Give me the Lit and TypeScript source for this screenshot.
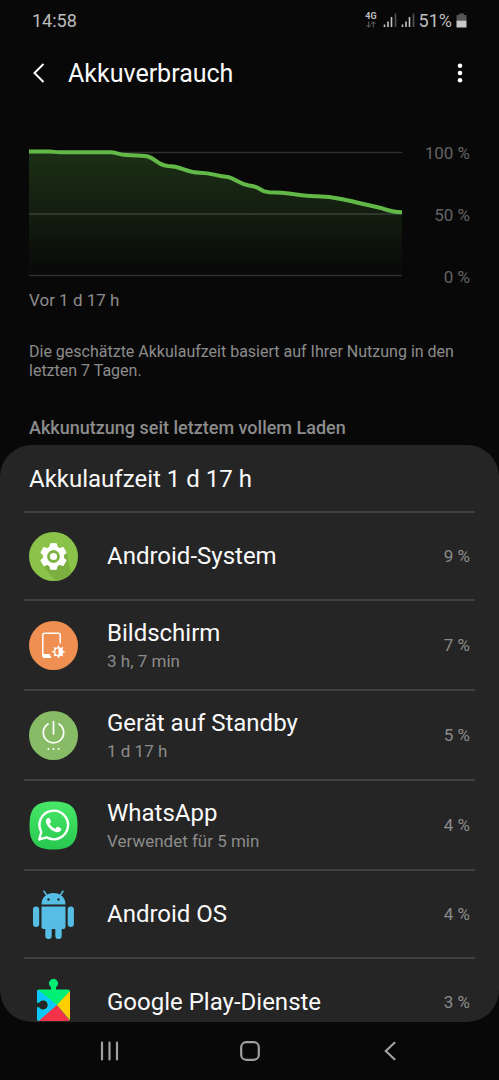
import { LitElement, html, svg, css } from "lit";
import { customElement } from "lit/decorators.js";

type Usage = { name: string; detail?: string; percent: number; icon: unknown };

const gearTeeth = [0, 60, 120, 180, 240, 300];

const systemIcon = svg`
  <circle cx="24.5" cy="24.5" r="24.5" fill="#8bc34a" />
  <path d="M15 36 L37 18 L42 42 A24.5 24.5 0 0 1 27 48.9 Z" fill="#7cae42" />
  <circle cx="24.5" cy="24.5" r="7.8" fill="none" stroke="#fff" stroke-width="5.4" />
  ${gearTeeth.map(
    (a) => svg`<path d="M20.5 16.5 L21.6 11.7 H27.4 L28.5 16.5 Z" fill="#fff" stroke="#fff"
      stroke-width="1" stroke-linejoin="round" transform="rotate(${a} 24.5 24.5)" />`
  )}
  <circle cx="24.5" cy="24.5" r="6.4" fill="#7cb342" />
  <circle cx="24.5" cy="24.5" r="3.6" fill="#fff" />`;

const displayIcon = svg`
  <circle cx="24.5" cy="24.5" r="24.5" fill="#ef8f51" />
  <path d="M31.2 22.5 V14 Q31.2 12.2 29.4 12.2 H15.6 Q13.8 12.2 13.8 14 V34.5 Q13.8 36.2 15.6 36.2 H22"
    fill="none" stroke="#fff" stroke-width="1.5" />
  <path d="M14 33 H20.5 L22.4 36.9 H15.6 Q14 36.9 14 35 Z" fill="#fff" />
  ${[0, 45, 90, 135, 180, 225, 270, 315].map(
    (a) => svg`<path d="M27.9 27 L29.5 24 L31.1 27 Z" fill="#fff" transform="rotate(${a} 29.5 30.8)" />`
  )}
  <circle cx="29.5" cy="30.8" r="3.9" fill="none" stroke="#fff" stroke-width="1.3" />
  <path d="M29.5 27 A3.8 3.8 0 0 1 29.5 34.6 Z" fill="#fff" />`;

const standbyIcon = svg`
  <circle cx="24.5" cy="24.5" r="24.5" fill="#87bb65" />
  <path d="M19 13 A10.2 10.2 0 1 0 30 13" fill="none" stroke="#fff" stroke-width="1.7" stroke-linecap="round" />
  <path d="M24.5 10.5 V23" stroke="#fff" stroke-width="1.7" stroke-linecap="round" />
  <circle cx="19.4" cy="38" r="1" fill="#fff" />
  <circle cx="24.5" cy="38" r="1" fill="#fff" />
  <circle cx="29.6" cy="38" r="1" fill="#fff" />`;

const whatsappIcon = svg`
  <defs>
    <linearGradient id="wa" x1="0" y1="0" x2="0" y2="1">
      <stop offset="0" stop-color="#48e768" />
      <stop offset="1" stop-color="#27c84e" />
    </linearGradient>
  </defs>
  <path d="M24.5 0.5 C42 0.5 48.5 6.5 48.5 24.5 C48.5 42 42 48.5 24.5 48.5 C7 48.5 0.5 42 0.5 24.5 C0.5 6.5 7 0.5 24.5 0.5 Z"
    fill="url(#wa)" />
  <path d="M10.3 38.4 L12.3 31 A14.3 14.3 0 1 1 17.7 36.4 Z" fill="none" stroke="#fff" stroke-width="2.4" stroke-linejoin="round" />
  <path transform="translate(9.2 8.8) scale(1.27)"
    d="M17.5 14.4c-.3-.15-1.76-.87-2.03-.97-.27-.1-.47-.15-.67.15-.2.3-.77.97-.94 1.16-.17.2-.35.22-.64.08-.3-.15-1.26-.46-2.39-1.48-.88-.79-1.48-1.76-1.65-2.06-.17-.3-.02-.46.13-.6.13-.14.3-.35.45-.52.15-.18.2-.3.3-.5.1-.2.05-.37-.03-.52-.07-.15-.67-1.61-.91-2.2-.24-.58-.49-.5-.67-.51h-.57c-.2 0-.52.07-.79.37-.27.3-1.04 1.02-1.04 2.48s1.07 2.88 1.21 3.07c.15.2 2.1 3.2 5.08 4.49.71.3 1.26.49 1.7.63.71.22 1.36.19 1.87.12.57-.09 1.76-.72 2.01-1.42.25-.69.25-1.29.17-1.41-.07-.13-.27-.2-.56-.35z"
    fill="#fff" />`;

const robotIcon = svg`
  <g fill="#56bde4">
    <path d="M12.5 14.5 C12.5 7 18 3 24.5 3 C31 3 36.5 7 36.5 14.5 Z" />
    <path d="M12.5 16.5 H36.5 V37 Q36.5 39 34.5 39 H14.5 Q12.5 39 12.5 37 Z" />
    <rect x="4" y="16.5" width="6.2" height="20.5" rx="3" />
    <rect x="38.7" y="16.5" width="6.2" height="20.5" rx="3" />
    <rect x="16.3" y="34" width="6.4" height="15" rx="3" />
    <rect x="26.3" y="34" width="6.4" height="15" rx="3" />
  </g>
  <path d="M15 1.2 L18 5.5 M34 1.2 L31 5.5" stroke="#56bde4" stroke-width="1.5" stroke-linecap="round" />
  <circle cx="19.5" cy="9.5" r="1.2" fill="#252525" />
  <circle cx="29.5" cy="9.5" r="1.2" fill="#252525" />`;

const playServicesIcon = svg`
  <defs>
    <clipPath id="puzzle">
      <path d="M10 11.5 H22 V9.3 A4.6 4.6 0 1 1 27 9.3 V11.5 H39 Q41 11.5 41 13.5 V41 Q41 43 39 43 H10 Q8 43 8 41
        V29.5 H10.2 A4.7 4.7 0 1 0 10.2 24.5 H8 V13.5 Q8 11.5 10 11.5 Z" />
    </clipPath>
  </defs>
  <g clip-path="url(#puzzle)">
    <rect x="7" y="0" width="35" height="44" fill="#00f076" />
    <path d="M7 10.5 L10 12.5 L28 27 L10 43 L7 44 Z" fill="#0cc8ff" />
    <path d="M41.5 12.5 V42.5 L28 27 Z" fill="#ffcd00" />
    <path d="M9 43.5 L28 27 L41 42.5 V43.5 Z" fill="#f43249" />
  </g>`;

const usages: Usage[] = [
  { name: "Android-System", percent: 9, icon: systemIcon },
  { name: "Bildschirm", detail: "3 h, 7 min", percent: 7, icon: displayIcon },
  { name: "Gerät auf Standby", detail: "1 d 17 h", percent: 5, icon: standbyIcon },
  { name: "WhatsApp", detail: "Verwendet für 5 min", percent: 4, icon: whatsappIcon },
  { name: "Android OS", percent: 4, icon: robotIcon },
  { name: "Google Play-Dienste", percent: 3, icon: playServicesIcon },
];

const curve =
  "M0 11.5 H21 C25 11.5 26 12.3 31 12.3 H81 C88 12.3 90 15 97 15 C104 15.3 112 15 119 16.5 C127 19 129 25.5 139 26 C153 26 155 32.5 171 32.7 C185 33 186 36 199 37 C207 39 210 44 220 45.5 C234 47 229 51.5 240 52.3 C262 52.5 270 56 286 56.3 C306 56 309 59 323 61.2 C337 65 342 65.5 353 68.3 C361 71 365 72 373 72.2";

@customElement("app-root")
class AppRoot extends LitElement {
  static styles = css`
    :host {
      display: flex;
      flex-direction: column;
      height: 100vh;
      overflow: hidden;
      background: #080808;
      color: #fafafa;
      font-family: Roboto, "Noto Sans", sans-serif;
    }
    button {
      display: flex;
      align-items: center;
      justify-content: center;
      padding: 0;
      border: 0;
      background: none;
      color: inherit;
    }
    svg {
      display: block;
      flex: none;
    }
    .status {
      display: flex;
      align-items: center;
      justify-content: space-between;
      height: 40px;
      padding: 0 32px;
      color: #bdbdbd;
      font-size: 18px;
    }
    .indicators {
      display: flex;
      align-items: center;
      gap: 4px;
    }
    .network {
      display: flex;
      flex-direction: column;
      align-items: center;
      margin-right: 2px;
      font-size: 9px;
      line-height: 9px;
      font-weight: 700;
    }
    .bar {
      display: flex;
      align-items: center;
      height: 66px;
      padding: 0 25px;
    }
    .bar button {
      width: 28px;
      height: 40px;
    }
    .bar h1 {
      flex: 1;
      margin: 0 0 0 15px;
      font-size: 25px;
      font-weight: 400;
    }
    .summary {
      padding: 34px 29px 0;
      color: #8c8c8c;
    }
    .chart {
      display: flex;
      color: #636363;
      font-size: 17px;
    }
    .plot {
      flex: 1;
      min-width: 0;
      height: 144px;
      overflow: visible;
    }
    .scale {
      display: flex;
      flex-direction: column;
      justify-content: space-between;
      align-items: flex-end;
      width: 68px;
      height: 144px;
      margin-top: 3px;
      line-height: 20px;
    }
    .since {
      margin: 3px 0 0;
      font-size: 17px;
      line-height: 20px;
    }
    .note {
      margin: 32px 0 0;
      font-size: 16px;
      line-height: 19px;
    }
    .summary h2 {
      margin: 37px 0 0;
      font-size: 18px;
      line-height: 22px;
      font-weight: 500;
    }
    .card {
      flex: 1;
      min-height: 0;
      margin-top: 6px;
      padding: 0 24px;
      overflow: hidden;
      border-radius: 32px;
      background: #252525;
    }
    .card h3 {
      margin: 0;
      padding: 2px 5px 0;
      font-size: 24px;
      line-height: 64px;
      font-weight: 400;
    }
    .card ul {
      margin: 0;
      padding: 0;
      list-style: none;
    }
    .row {
      display: flex;
      align-items: center;
      height: 86px;
      padding: 0 5px;
      border-top: 2px solid #414141;
    }
    .row.tall {
      height: 88px;
    }
    .text {
      flex: 1;
      margin-left: 29px;
    }
    .tall .text {
      padding-top: 2px;
    }
    .name {
      font-size: 24px;
      line-height: 30px;
    }
    .detail {
      color: #8c8c8c;
      font-size: 17px;
      line-height: 26px;
    }
    .percent {
      color: #8c8c8c;
      font-size: 17px;
    }
    .nav {
      display: flex;
      justify-content: center;
      gap: 80px;
      height: 58px;
      color: #a0a0a0;
    }
    .nav button {
      width: 60px;
    }
  `;

  private signal() {
    return html`<svg width="14" height="15" viewBox="0 0 14 15" aria-hidden="true">
      <path d="M1.5 11.5 V14 M5 8.5 V14 M8.5 4 V14" stroke="#c4c4c4" stroke-width="1.6" />
      <path d="M12.5 0.5 V14" stroke="#555" stroke-width="1.6" />
    </svg>`;
  }

  private row(u: Usage) {
    return html`<li class="row ${u.detail ? "tall" : ""}">
      <svg width="49" height="49" viewBox="0 0 49 49" aria-hidden="true">${u.icon}</svg>
      <div class="text">
        <div class="name">${u.name}</div>
        ${u.detail ? html`<div class="detail">${u.detail}</div>` : ""}
      </div>
      <span class="percent">${u.percent} %</span>
    </li>`;
  }

  render() {
    return html`
      <div class="status">
        <span>14:58</span>
        <div class="indicators">
          <span class="network">
            <span>4G</span>
            <svg width="10" height="7" viewBox="0 0 10 7" aria-hidden="true">
              <path d="M2.7 0.5 V6 M0.5 4 L2.7 6.2 L4.9 4 M7.3 6.5 V1 M5.3 3 L7.3 0.8 L9.5 3" fill="none" stroke="#666" />
            </svg>
          </span>
          ${this.signal()} ${this.signal()}
          <span>51%</span>
          <svg width="11" height="15" viewBox="0 0 11 15" aria-hidden="true">
            <path d="M3 0.5 H8 V2 H10 Q10.5 2 10.5 2.5 V7.5 H0.5 V2.5 Q0.5 2 1 2 H3 Z" fill="#555" />
            <path d="M0.5 7.5 H10.5 V14 Q10.5 14.5 10 14.5 H1 Q0.5 14.5 0.5 14 Z" fill="#c8c8c8" />
          </svg>
        </div>
      </div>

      <header class="bar">
        <button aria-label="Zurück">
          <svg width="12" height="20" viewBox="0 0 12 20">
            <path d="M10.5 1 L1.5 10 L10.5 19" fill="none" stroke="#fafafa" stroke-width="2" />
          </svg>
        </button>
        <h1>Akkuverbrauch</h1>
        <button aria-label="Weitere Optionen">
          <svg width="6" height="20" viewBox="0 0 6 20">
            <circle cx="3" cy="2.7" r="2.3" fill="#fff" />
            <circle cx="3" cy="10" r="2.3" fill="#fff" />
            <circle cx="3" cy="17.3" r="2.3" fill="#fff" />
          </svg>
        </button>
      </header>

      <section class="summary">
        <div class="chart">
          <svg class="plot" viewBox="0 0 373 144" preserveAspectRatio="none" role="img" aria-label="Akkustand">
            <defs>
              <linearGradient id="fill" gradientUnits="userSpaceOnUse" x1="0" y1="12" x2="0" y2="136">
                <stop offset="0" stop-color="#62b947" stop-opacity="0.22" />
                <stop offset="0.5" stop-color="#62b947" stop-opacity="0.12" />
                <stop offset="1" stop-color="#62b947" stop-opacity="0" />
              </linearGradient>
            </defs>
            <path d="${curve} V136 H0 Z" fill="url(#fill)" />
            <path d="M0 12.5 H373 M0 74 H373 M0 135.5 H373" stroke="#fff" stroke-opacity="0.16" stroke-width="1.5" />
            <path d="${curve}" fill="none" stroke="#62b947" stroke-width="4" />
          </svg>
          <div class="scale"><span>100 %</span><span>50 %</span><span>0 %</span></div>
        </div>
        <p class="since">Vor 1 d 17 h</p>
        <p class="note">Die geschätzte Akkulaufzeit basiert auf Ihrer Nutzung in den letzten 7 Tagen.</p>
        <h2>Akkunutzung seit letztem vollem Laden</h2>
      </section>

      <section class="card">
        <h3>Akkulaufzeit 1 d 17 h</h3>
        <ul>
          ${usages.map((u) => this.row(u))}
        </ul>
      </section>

      <nav class="nav">
        <button aria-label="Letzte Apps">
          <svg width="20" height="20" viewBox="0 0 20 20">
            <path d="M2 1.5 V18.5 M9.5 1.5 V18.5 M17 1.5 V18.5" stroke="currentColor" stroke-width="2.2" stroke-linecap="round" />
          </svg>
        </button>
        <button aria-label="Startbildschirm">
          <svg width="20" height="20" viewBox="0 0 20 20">
            <rect x="1.2" y="1.2" width="17.6" height="17.6" rx="5" fill="none" stroke="currentColor" stroke-width="2.2" />
          </svg>
        </button>
        <button aria-label="Zurück">
          <svg width="12" height="20" viewBox="0 0 12 20">
            <path d="M10.5 1.8 L1.8 10 L10.5 18.2" fill="none" stroke="currentColor" stroke-width="2.2" stroke-linecap="round" />
          </svg>
        </button>
      </nav>
    `;
  }
}
